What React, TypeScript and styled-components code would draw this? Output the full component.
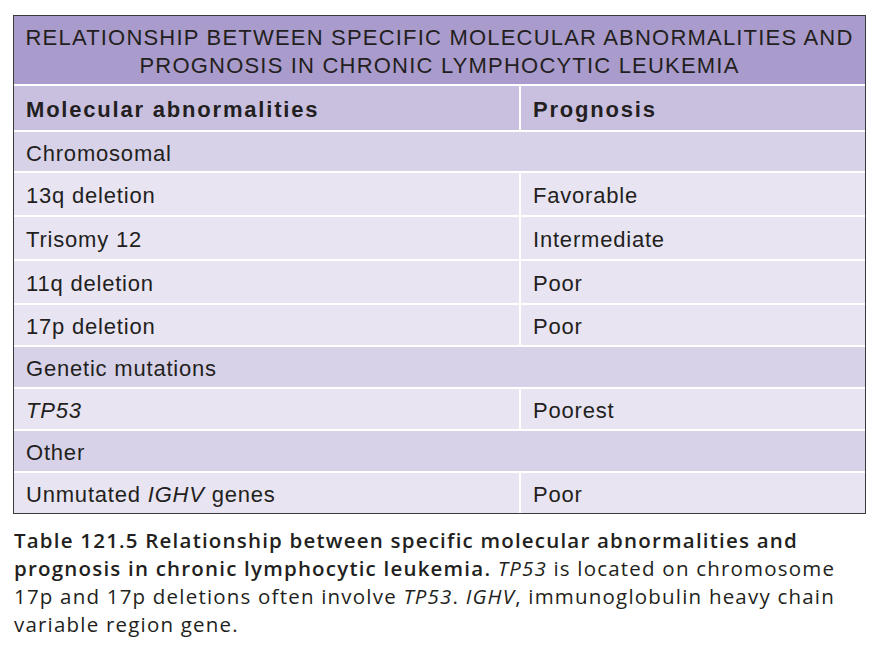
import React from 'react';
import styled, { createGlobalStyle } from 'styled-components';

type RowKind = 'data' | 'group';

interface Row {
  kind: RowKind;
  left: React.ReactNode;
  right?: string;
  h: number;
}

const rows: Row[] = [
  { kind: 'group', left: 'Chromosomal', h: 39 },
  { kind: 'data', left: '13q deletion', right: 'Favorable', h: 42 },
  { kind: 'data', left: 'Trisomy 12', right: 'Intermediate', h: 42 },
  { kind: 'data', left: '11q deletion', right: 'Poor', h: 42 },
  { kind: 'data', left: '17p deletion', right: 'Poor', h: 40 },
  { kind: 'group', left: 'Genetic mutations', h: 40 },
  { kind: 'data', left: <i>TP53</i>, right: 'Poorest', h: 40 },
  { kind: 'group', left: 'Other', h: 40 },
  {
    kind: 'data',
    left: (
      <>
        Unmutated <i>IGHV</i> genes
      </>
    ),
    right: 'Poor',
    h: 40,
  },
];

const GlobalStyle = createGlobalStyle`
  body {
    margin: 0;
    background: #ffffff;
  }
`;

const Page = styled.div`
  width: 881px;
  height: 656px;
  padding: 15px 0 0 13px;
  box-sizing: border-box;
  background: #ffffff;
`;

const Table = styled.div`
  width: 851px;
  border: 1px solid #3a3a3a;
  display: flex;
  flex-direction: column;
  gap: 2px;
  background: #ffffff;
  font-family: 'Liberation Sans', Arial, sans-serif;
  color: #231f20;
`;

const Title = styled.div`
  height: 68px;
  background: #a99bcb;
  display: flex;
  flex-direction: column;
  align-items: center;
  justify-content: center;
  text-align: center;
  font-size: 22px;
  letter-spacing: 1.2px;
  line-height: 28px;
  padding-top: 3px;
  box-sizing: border-box;
  white-space: nowrap;
`;

const Body = styled.div`
  display: flex;
  flex-direction: column;
  gap: 2px;
`;

const Grid = styled.div<{ $h: number }>`
  display: grid;
  grid-template-columns: 505px 1fr;
  column-gap: 2px;
  height: ${({ $h }) => $h}px;
`;

const Cell = styled.div<{ $tone: 'head' | 'group' | 'data' }>`
  display: flex;
  align-items: center;
  padding: 4px 0 0 12px;
  box-sizing: border-box;
  font-size: 22px;
  white-space: nowrap;
  background: ${({ $tone }) =>
    $tone === 'head' ? '#c9c0e0' : $tone === 'group' ? '#d8d2e8' : '#e8e4f2'};
  font-weight: ${({ $tone }) => ($tone === 'head' ? 'bold' : 'normal')};
  letter-spacing: ${({ $tone }) => ($tone === 'head' ? '1.8px' : '0.8px')};
  grid-column: ${({ $tone }) => ($tone === 'group' ? '1 / span 2' : 'auto')};
`;

const Caption = styled.div`
  margin: 12px 0 0 1px;
  font-family: 'Open Sans', 'Noto Sans', sans-serif;
  font-size: 20.5px;
  color: #231f20;
  white-space: nowrap;

  b {
    font-weight: 600;
  }
`;

const CaptionLine = styled.div`
  height: 28px;
  line-height: 28px;
  letter-spacing: 1.2px;
`;

const App: React.FC = () => (
  <Page>
    <GlobalStyle />
    <Table>
      <Title>
        <span>RELATIONSHIP BETWEEN SPECIFIC MOLECULAR ABNORMALITIES AND</span>
        <span>PROGNOSIS IN CHRONIC LYMPHOCYTIC LEUKEMIA</span>
      </Title>
      <Body>
        <Grid $h={44}>
          <Cell $tone="head">Molecular abnormalities</Cell>
          <Cell $tone="head">Prognosis</Cell>
        </Grid>
        {rows.map((r, i) =>
          r.kind === 'group' ? (
            <Grid key={i} $h={r.h}>
              <Cell $tone="group">{r.left}</Cell>
            </Grid>
          ) : (
            <Grid key={i} $h={r.h}>
              <Cell $tone="data">
                <span>{r.left}</span>
              </Cell>
              <Cell $tone="data">{r.right}</Cell>
            </Grid>
          )
        )}
      </Body>
    </Table>
    <Caption>
      <CaptionLine>
        <b>Table 121.5 Relationship between specific molecular abnormalities and</b>
      </CaptionLine>
      <CaptionLine>
        <b>prognosis in chronic lymphocytic leukemia.</b> <i>TP53</i> is located on chromosome
      </CaptionLine>
      <CaptionLine>
        17p and 17p deletions often involve <i>TP53</i>. <i>IGHV</i>, immunoglobulin heavy chain
      </CaptionLine>
      <CaptionLine>variable region gene.</CaptionLine>
    </Caption>
  </Page>
);

export default App;
